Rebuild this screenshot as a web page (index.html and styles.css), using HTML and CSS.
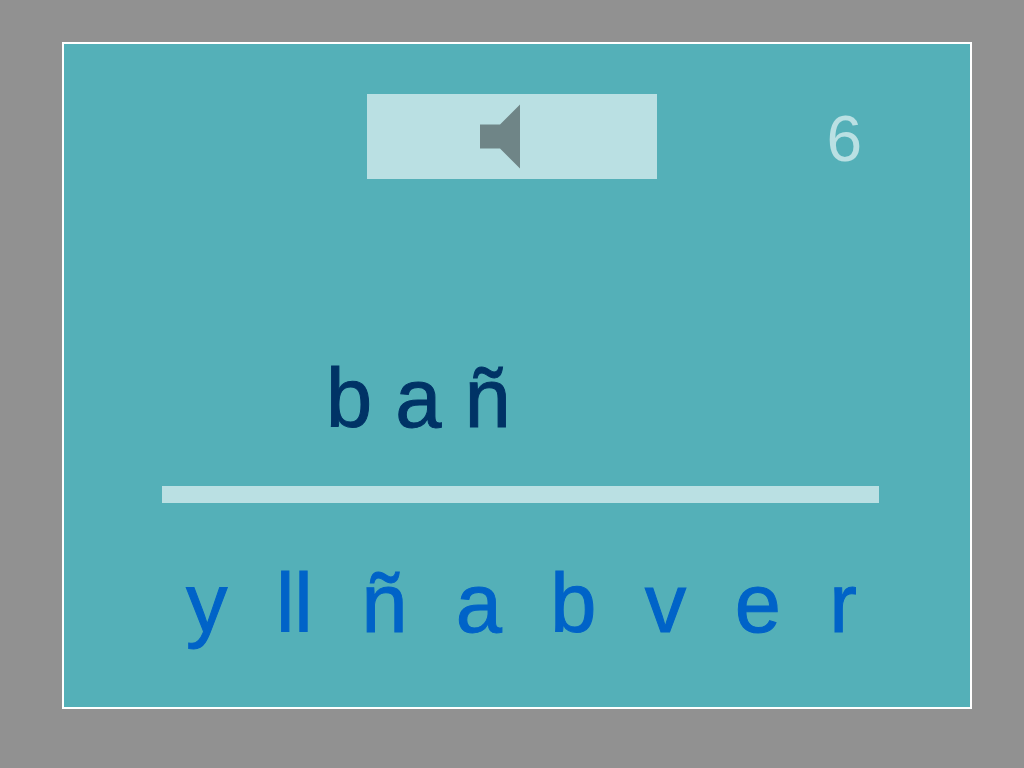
FILE: index.html
```html
<!DOCTYPE html>
<html lang="es">
<head>
  <meta charset="UTF-8">
  <title>Dictado 6</title>
  <link rel="stylesheet" href="styles.css">
</head>
<body>
  <main class="board">
    <header class="top">
      <button class="sound" type="button" aria-label="Escuchar">
        <svg width="40" height="64" viewBox="0 0 40 64"><path d="M0 19.5H20L40 -0.5V63.5L20 43.5H0Z" fill="#6f8587"/></svg>
      </button>
      <span class="number">6</span>
    </header>
    <div class="word">b a ñ</div>
    <hr class="line">
    <div class="letters">
      <button type="button">y</button>
      <button type="button">ll</button>
      <button type="button">ñ</button>
      <button type="button">a</button>
      <button type="button">b</button>
      <button type="button">v</button>
      <button type="button">e</button>
      <button type="button">r</button>
    </div>
  </main>
</body>
</html>
```
FILE: styles.css
```css
* {
  box-sizing: border-box;
}
body {
  margin: 0;
  min-height: 100vh;
  padding: 42px 52px 59px 62px;
  display: flex;
  background: #919191;
  font-family: "Liberation Sans", Arial, sans-serif;
}
.board {
  flex: 1;
  border: 2px solid #fff;
  background: #54b0b8;
  padding: 50px 91px 0 98px;
}
button {
  border: none;
  padding: 0;
  font-family: inherit;
  cursor: pointer;
}
.top {
  display: grid;
  grid-template-columns: 1fr 290px 1fr;
  margin-right: 17px;
}
.sound {
  grid-column: 2;
  height: 85px;
  padding-right: 24px;
  display: flex;
  align-items: center;
  justify-content: center;
  background: #bae0e3;
}
.sound svg {
  overflow: visible;
}
.number {
  color: #bae0e3;
  font-size: 64px;
  line-height: 90px;
  text-align: right;
}
.word,
.letters button {
  font-size: 83px;
  line-height: 100px;
  -webkit-text-stroke: 1px;
}
.word {
  margin-top: 165px;
  padding-left: 164px;
  color: #003366;
}
.line {
  height: 17px;
  margin: 37px 0 51px;
  border: none;
  background: #bae0e3;
}
.letters {
  display: flex;
  justify-content: space-between;
  padding: 0 22px 0 24px;
}
.letters button {
  background: none;
  color: #0063c8;
}
```
